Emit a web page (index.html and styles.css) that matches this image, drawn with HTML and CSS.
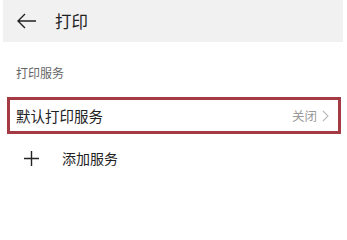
FILE: index.html
```html
<!DOCTYPE html>
<html>
<head>
<meta charset="utf-8">
<link rel="stylesheet" href="styles.css">
</head>
<body>
<div class="page">
  <header class="topbar">
    <svg class="back" width="20" height="16" viewBox="0 0 20 16">
      <path d="M1 8 H19 M8 1 L1 8 L8 15" fill="none" stroke="#222" stroke-width="1.4"/>
    </svg>
    <span class="title">打印</span>
  </header>
  <div class="section-label">打印服务</div>
  <div class="item selected">
    <span class="item-text">默认打印服务</span>
    <span class="item-right">关闭
      <svg class="chev" width="7" height="12" viewBox="0 0 7 12">
        <path d="M1 1 L6 6 L1 11" fill="none" stroke="#bbb" stroke-width="1.1"/>
      </svg>
    </span>
  </div>
  <div class="add">
    <svg class="plus" width="15" height="15" viewBox="0 0 15 15">
      <path d="M7.5 0 V15 M0 7.5 H15" stroke="#222" stroke-width="1.4"/>
    </svg>
    <span class="add-text">添加服务</span>
  </div>
</div>
</body>
</html>
```
FILE: styles.css
```css
html, body {
  margin: 0;
  padding: 0;
  background: #fff;
}
body {
  font-family: "Noto Sans CJK SC", "Noto Sans", sans-serif;
  color: #222;
}
.page {
  padding: 0 4px 0 3px;
}
.topbar {
  background: #f1f1f1;
  height: 42px;
  display: flex;
  align-items: center;
  padding-left: 14px;
}
.back {
  display: block;
}
.title {
  margin-left: 18px;
  font-size: 16.5px;
  color: #222;
  line-height: 1;
}
.section-label {
  font-size: 12px;
  color: #666;
  padding: 22px 0 0 13px;
  line-height: 17px;
  margin-bottom: 16px;
}
.item {
  margin-left: 4px;
  margin-right: 2px;
  height: 37px;
  box-sizing: border-box;
  border: 3px solid #a33a44;
  display: flex;
  align-items: center;
  justify-content: space-between;
  padding: 0 9px 0 6px;
}
.item-text {
  font-size: 14.5px;
  color: #222;
}
.item-right {
  font-size: 12.5px;
  color: #999;
  display: flex;
  align-items: center;
  gap: 5px;
}
.chev {
  display: block;
}
.add {
  display: flex;
  align-items: center;
  height: 48px;
  padding-left: 21px;
}
.plus {
  display: block;
}
.add-text {
  margin-left: 23px;
  font-size: 14px;
  color: #222;
}
```
